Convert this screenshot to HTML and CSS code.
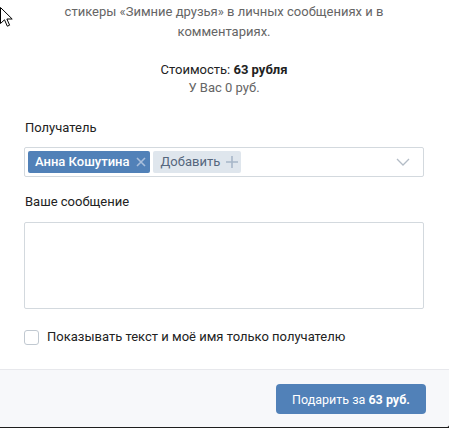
FILE: index.html
```html
<!DOCTYPE html>
<html lang="ru">
<head>
<meta charset="utf-8">
<link rel="stylesheet" href="styles.css">
</head>
<body>
<div class="box">
  <div class="content">
    <p class="desc">стикеры «Зимние друзья» в личных сообщениях и в комментариях.</p>
    <div class="cost">
      <div class="cost-line">Стоимость: <b>63 рубля</b></div>
      <div class="cost-have">У Вас 0 руб.</div>
    </div>
    <div class="label">Получатель</div>
    <div class="picker">
      <span class="token token-sel">Анна Кошутина
        <svg class="x" width="10" height="10" viewBox="0 0 10 10"><path d="M1 1L9 9M9 1L1 9" stroke="#a9bfdc" stroke-width="1.6"/></svg>
      </span>
      <span class="token token-add">Добавить
        <svg class="plus" width="12" height="12" viewBox="0 0 12 12"><path d="M6 0V12M0 6H12" stroke="#a7b7c8" stroke-width="1.6"/></svg>
      </span>
      <svg class="chev" width="14" height="8" viewBox="0 0 14 8"><path d="M1 1L7 7L13 1" fill="none" stroke="#b3bcc6" stroke-width="1.3"/></svg>
    </div>
    <div class="label label2">Ваше сообщение</div>
    <div class="textarea"></div>
    <label class="check">
      <span class="box-check"></span>
      <span>Показывать текст и моё имя только получателю</span>
    </label>
  </div>
  <div class="footer">
    <button class="btn">Подарить за <b>63 руб.</b></button>
  </div>
  <svg class="cursor" width="14" height="22" viewBox="0 0 14 22"><path d="M0.5 0.5V16.5L4.5 12.8L7.3 19.2L9.6 18.2L6.9 12H12.2Z" fill="#fff" stroke="#000" stroke-width="1"/></svg>
</div>
</body>
</html>
```
FILE: styles.css
```css
html, body {
  margin: 0;
  padding: 0;
}
body {
  background: #1e1e1e;
  width: 449px;
  height: 428px;
  overflow: hidden;
  font-family: Roboto, "Noto Sans", sans-serif;
  font-size: 13px;
  color: #222;
}
.box {
  position: relative;
  width: 449px;
  height: 427px;
  background: #fff;
  display: flex;
  flex-direction: column;
  border-bottom-right-radius: 3px;
  overflow: hidden;
}
.content {
  padding: 2px 25px 0 24px;
  flex: 1;
}
.desc {
  margin: 0;
  line-height: 20px;
  text-align: center;
  color: #656565;
  padding: 0 40px;
}
.cost {
  margin-top: 19px;
  text-align: center;
  line-height: 18px;
}
.cost b {
  font-weight: 700;
}
.cost-have {
  color: #656565;
}
.label {
  margin-top: 22px;
  line-height: 18px;
  padding-left: 1px;
}
.picker {
  margin-top: 10px;
  height: 28px;
  border: 1px solid #d3d9de;
  border-radius: 2px;
  display: flex;
  align-items: center;
  padding: 0 3px;
  gap: 3px;
}
.token {
  height: 22px;
  display: inline-flex;
  align-items: center;
  border-radius: 2px;
  box-sizing: border-box;
  line-height: 22px;
}
.token-sel {
  background: #5181b8;
  color: #fff;
  font-weight: 500;
  padding: 0 4px 0 7px;
  gap: 6px;
}
.token-add {
  background: #dfe6ed;
  color: #55677d;
  padding: 0 3px 0 8px;
  gap: 6px;
}
.chev {
  margin-left: auto;
  margin-right: 10px;
}
.label2 {
  margin-top: 16px;
}
.textarea {
  margin-top: 11px;
  height: 85px;
  border: 1px solid #d3d9de;
  border-radius: 2px;
}
.check {
  margin-top: 20px;
  display: flex;
  align-items: center;
  gap: 8px;
  line-height: 16px;
}
.box-check {
  width: 13px;
  height: 13px;
  border: 1px solid #c1c9d1;
  border-radius: 3px;
  box-sizing: content-box;
}
.footer {
  border-top: 1px solid #e7e8ec;
  background: #f7f8fa;
  display: flex;
  justify-content: flex-end;
  align-items: flex-start;
  padding: 14px 23px 0 0;
  box-sizing: border-box;
  height: 58px;
}
.btn {
  width: 150px;
  height: 30px;
  background: #5181b8;
  color: #fff;
  border: 0;
  border-radius: 4px;
  font-family: Roboto, "Noto Sans", sans-serif;
  font-size: 12.5px;
  padding: 0;
}
.btn b {
  font-weight: 700;
}
.cursor {
  position: absolute;
  left: 0;
  top: 7px;
}
```
